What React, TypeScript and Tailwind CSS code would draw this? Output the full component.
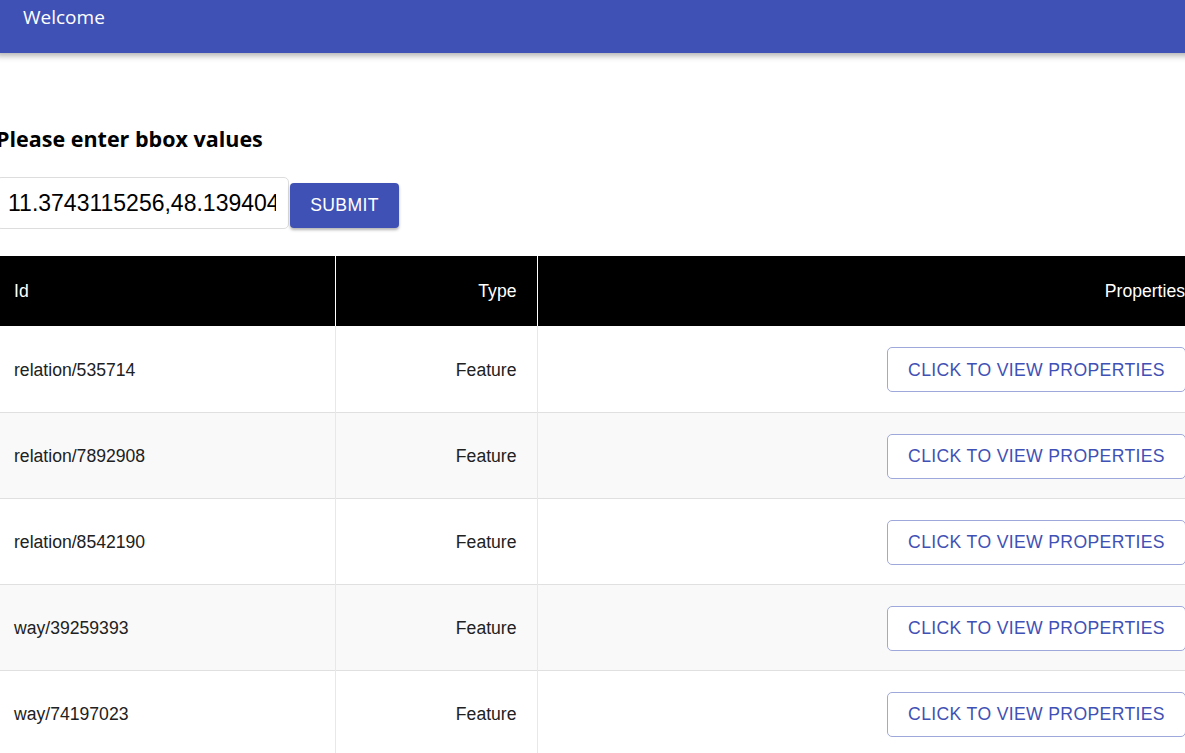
const rows = [
  { id: 'relation/535714', type: 'Feature' },
  { id: 'relation/7892908', type: 'Feature' },
  { id: 'relation/8542190', type: 'Feature' },
  { id: 'way/39259393', type: 'Feature' },
  { id: 'way/74197023', type: 'Feature' },
];

const Header = () => (
  <header className="relative z-10 h-[53px] bg-[#3f51b5] px-[27px] pt-[3px] shadow-[0_3px_6px_rgba(0,0,0,0.3)]">
    <span className="font-['Open_Sans',sans-serif] text-[19px] leading-[28px] text-white">Welcome</span>
  </header>
);

const BboxForm = () => (
  <div className="mt-[71px]">
    <h2 className="font-['Open_Sans',sans-serif] text-[21.5px] font-bold leading-[30px] text-black">
      Please enter bbox values
    </h2>
    <div className="mt-[23px] flex items-start gap-px">
      <input
        readOnly
        value="11.3743115256,48.1394047271,11.3870334625,48.1456939386"
        className="h-[52px] w-[293px] rounded-[5px] border border-[#dddddd] bg-white pl-[11px] pr-[12px] font-['Liberation_Sans',Arial,sans-serif] text-[23px] text-black outline-none"
      />
      <button className="mt-[6px] h-[45px] w-[109px] rounded-[4px] bg-[#3f51b5] font-['Liberation_Sans',Arial,sans-serif] text-[17.6px] tracking-[0.02em] text-white shadow-[0_2px_3px_rgba(0,0,0,0.3)]">
        SUBMIT
      </button>
    </div>
  </div>
);

const FeatureTable = () => (
  <table className="mt-[27px] w-[1209px] table-fixed border-collapse font-['Liberation_Sans',Arial,sans-serif] text-[17.6px]">
    <colgroup>
      <col className="w-[339px]" />
      <col className="w-[202px]" />
      <col />
    </colgroup>
    <thead>
      <tr className="h-[70px] bg-black text-white">
        <th className="border-r border-white px-[18px] text-left font-normal">Id</th>
        <th className="border-r border-white px-[20px] text-right font-normal">Type</th>
        <th className="px-[20px] text-right font-normal">Properties</th>
      </tr>
    </thead>
    <tbody className="text-[#212121]">
      {rows.map((row, i) => (
        <tr key={row.id} className={`h-[86px] border-b border-[#e0e0e0] ${i % 2 === 1 ? 'bg-[#f9f9f9]' : 'bg-white'}`}>
          <td className="border-r border-[#e8e8e8] px-[18px] pt-[2px]">{row.id}</td>
          <td className="border-r border-[#e8e8e8] px-[20px] pt-[2px] text-right">{row.type}</td>
          <td className="px-[19px] pt-[2px] text-right">
            <button className="h-[45px] w-[299px] rounded-[5px] border border-[#9fa8da] bg-white text-[17.6px] tracking-[0.02em] text-[#3f51b5]">
              CLICK TO VIEW PROPERTIES
            </button>
          </td>
        </tr>
      ))}
    </tbody>
  </table>
);

export default function App() {
  return (
    <div className="h-[753px] w-[1185px] overflow-hidden bg-white">
      <div className="-ml-[4px] w-[1209px]">
        <Header />
        <BboxForm />
        <FeatureTable />
      </div>
    </div>
  );
}
